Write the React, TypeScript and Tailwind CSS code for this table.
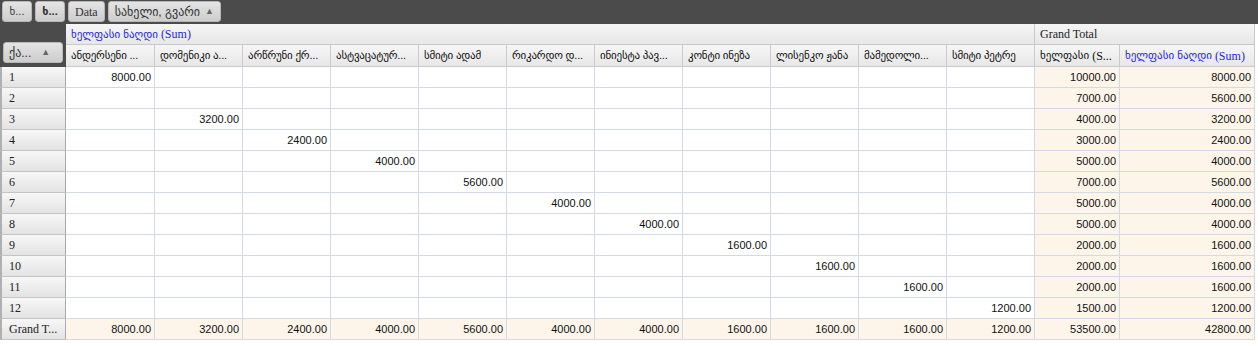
import React from "react";

const SANS = "font-['Liberation_Sans','DejaVu_Sans',sans-serif]";
const SERIF = "font-['Liberation_Serif','DejaVu_Sans',serif]";

const names = [
  "ანდერსენი ...",
  "დომენიკი ა...",
  "არწრუნი ქრ...",
  "ასტვაცატურ...",
  "სმიტი ადამ",
  "რიკარდო დ...",
  "ინიესტა პავ...",
  "კონტი ინეზა",
  "ლისენკო ჟანა",
  "მამედოლი...",
  "სმიტი პეტრე",
];

const totals: [string, string][] = [
  ["10000.00", "8000.00"],
  ["7000.00", "5600.00"],
  ["4000.00", "3200.00"],
  ["3000.00", "2400.00"],
  ["5000.00", "4000.00"],
  ["7000.00", "5600.00"],
  ["5000.00", "4000.00"],
  ["5000.00", "4000.00"],
  ["2000.00", "1600.00"],
  ["2000.00", "1600.00"],
  ["2000.00", "1600.00"],
  ["1500.00", "1200.00"],
];

const rowVals: ([number, string] | null)[] = [
  [0, "8000.00"],
  null,
  [1, "3200.00"],
  [2, "2400.00"],
  [3, "4000.00"],
  [4, "5600.00"],
  [5, "4000.00"],
  [6, "4000.00"],
  [7, "1600.00"],
  [8, "1600.00"],
  [9, "1600.00"],
  [10, "1200.00"],
];

const gtRow = [
  "8000.00",
  "3200.00",
  "2400.00",
  "4000.00",
  "5600.00",
  "4000.00",
  "4000.00",
  "1600.00",
  "1600.00",
  "1600.00",
  "1200.00",
];

function TopBtn({ children, bold, narrow }: { children: React.ReactNode; bold?: boolean; narrow?: boolean }) {
  return (
    <div
      className={`h-[21px] flex items-center rounded-[3px] border border-[#b8b8b8] bg-gradient-to-b from-[#e4e4e4] to-[#cdcdcd] text-[12px] text-[#333] whitespace-nowrap ${
        bold ? "font-bold" : ""
      } ${narrow ? "w-[30px] justify-center px-0" : "px-[6px]"}`}
    >
      {children}
    </div>
  );
}

const hdrCell =
  "h-full border-r border-b border-[#c9c9c9] bg-gradient-to-b from-[#f6f6f6] to-[#e7e7e7] flex items-center px-[5px] overflow-hidden whitespace-nowrap";
const rowHdr =
  "border-l-2 border-l-[#b0b0b0] border-r border-r-[#a9a9a9] border-b border-b-[#c4c4c4] bg-gradient-to-b from-[#f7f7f7] to-[#e3e3e3] flex items-center pl-[7px] text-[12px] text-[#222] whitespace-nowrap " +
  SERIF;
const dataCell =
  "border-r border-b border-[#d3dae6] flex items-center justify-end pr-[3px] text-[11px] text-[#111] " + SANS;

export default function App() {
  return (
    <div className={`w-[1258px] h-[346px] bg-white overflow-hidden ${SANS}`}>
      {/* top bar */}
      <div className="h-[24px] bg-[#4b4b4b] flex items-start gap-[3px] pl-[2px] pt-[1px]">
        <TopBtn narrow>
          <span className="text-[11px]">ხ...</span>
        </TopBtn>
        <TopBtn narrow bold>
          <span className="text-[11px]">ხ...</span>
        </TopBtn>
        <TopBtn>
          <span className={SERIF}>Data</span>
        </TopBtn>
        <TopBtn>
          <span className="text-[12px]">სახელი, გვარი</span>
          <span className="ml-[5px] text-[9px] text-[#666]">▲</span>
        </TopBtn>
      </div>

      <div className="grid grid-cols-[66px_89px_repeat(10,88px)_85px_135px] grid-rows-[21px_22px_repeat(13,21px)]">
        <div className="row-span-2 bg-[#4b4b4b] flex items-end pl-[3px] pb-[4px]">
          <div className="w-[60px] h-[21px] rounded-[3px] border border-[#b8b8b8] bg-gradient-to-b from-[#e4e4e4] to-[#cdcdcd] flex items-center px-[5px] text-[12px] text-[#333] whitespace-nowrap">
            <span>ქა...</span>
            <span className="ml-[10px] text-[9px] text-[#666]">▲</span>
          </div>
        </div>
        <div className={`col-span-11 ${hdrCell} text-[11px] text-[#2424e6]`}>
          <span>ხელფასი ნაღდი </span>
          <span className={`${SERIF} text-[12px] ml-[3px]`}>(Sum)</span>
        </div>
        <div className={`col-span-2 ${hdrCell} ${SERIF} text-[12px] text-[#222]`}>Grand Total</div>

        {names.map((n) => (
          <div key={n} className={`${hdrCell} text-[11px] text-[#111] tracking-[-0.2px]`}>
            <span>{n}</span>
          </div>
        ))}
        <div className={`${hdrCell} text-[11px] text-[#111]`}>
          <span>ხელფასი </span>
          <span className={`${SERIF} text-[12px] ml-[3px]`}>(S...</span>
        </div>
        <div className={`${hdrCell} text-[11px] text-[#2424e6]`}>
          <span>ხელფასი ნაღდი </span>
          <span className={`${SERIF} text-[12px] ml-[3px]`}>(Sum)</span>
        </div>

        {rowVals.map((rv, r) => (
          <React.Fragment key={r}>
            <div className={rowHdr}>{r + 1}</div>
            {names.map((_, c) => (
              <div key={c} className={`${dataCell} bg-white`}>
                {rv && rv[0] === c ? rv[1] : ""}
              </div>
            ))}
            <div className={`${dataCell} bg-[#fdf5ea]`}>{totals[r][0]}</div>
            <div className={`${dataCell} bg-[#fdf5ea]`}>{totals[r][1]}</div>
          </React.Fragment>
        ))}

        <div className={rowHdr}>Grand T...</div>
        {gtRow.map((v, c) => (
          <div key={c} className={`${dataCell} bg-[#fdf5ea]`}>
            {v}
          </div>
        ))}
        <div className={`${dataCell} bg-[#fdf5ea]`}>53500.00</div>
        <div className={`${dataCell} bg-[#fdf5ea]`}>42800.00</div>
      </div>
    </div>
  );
}
